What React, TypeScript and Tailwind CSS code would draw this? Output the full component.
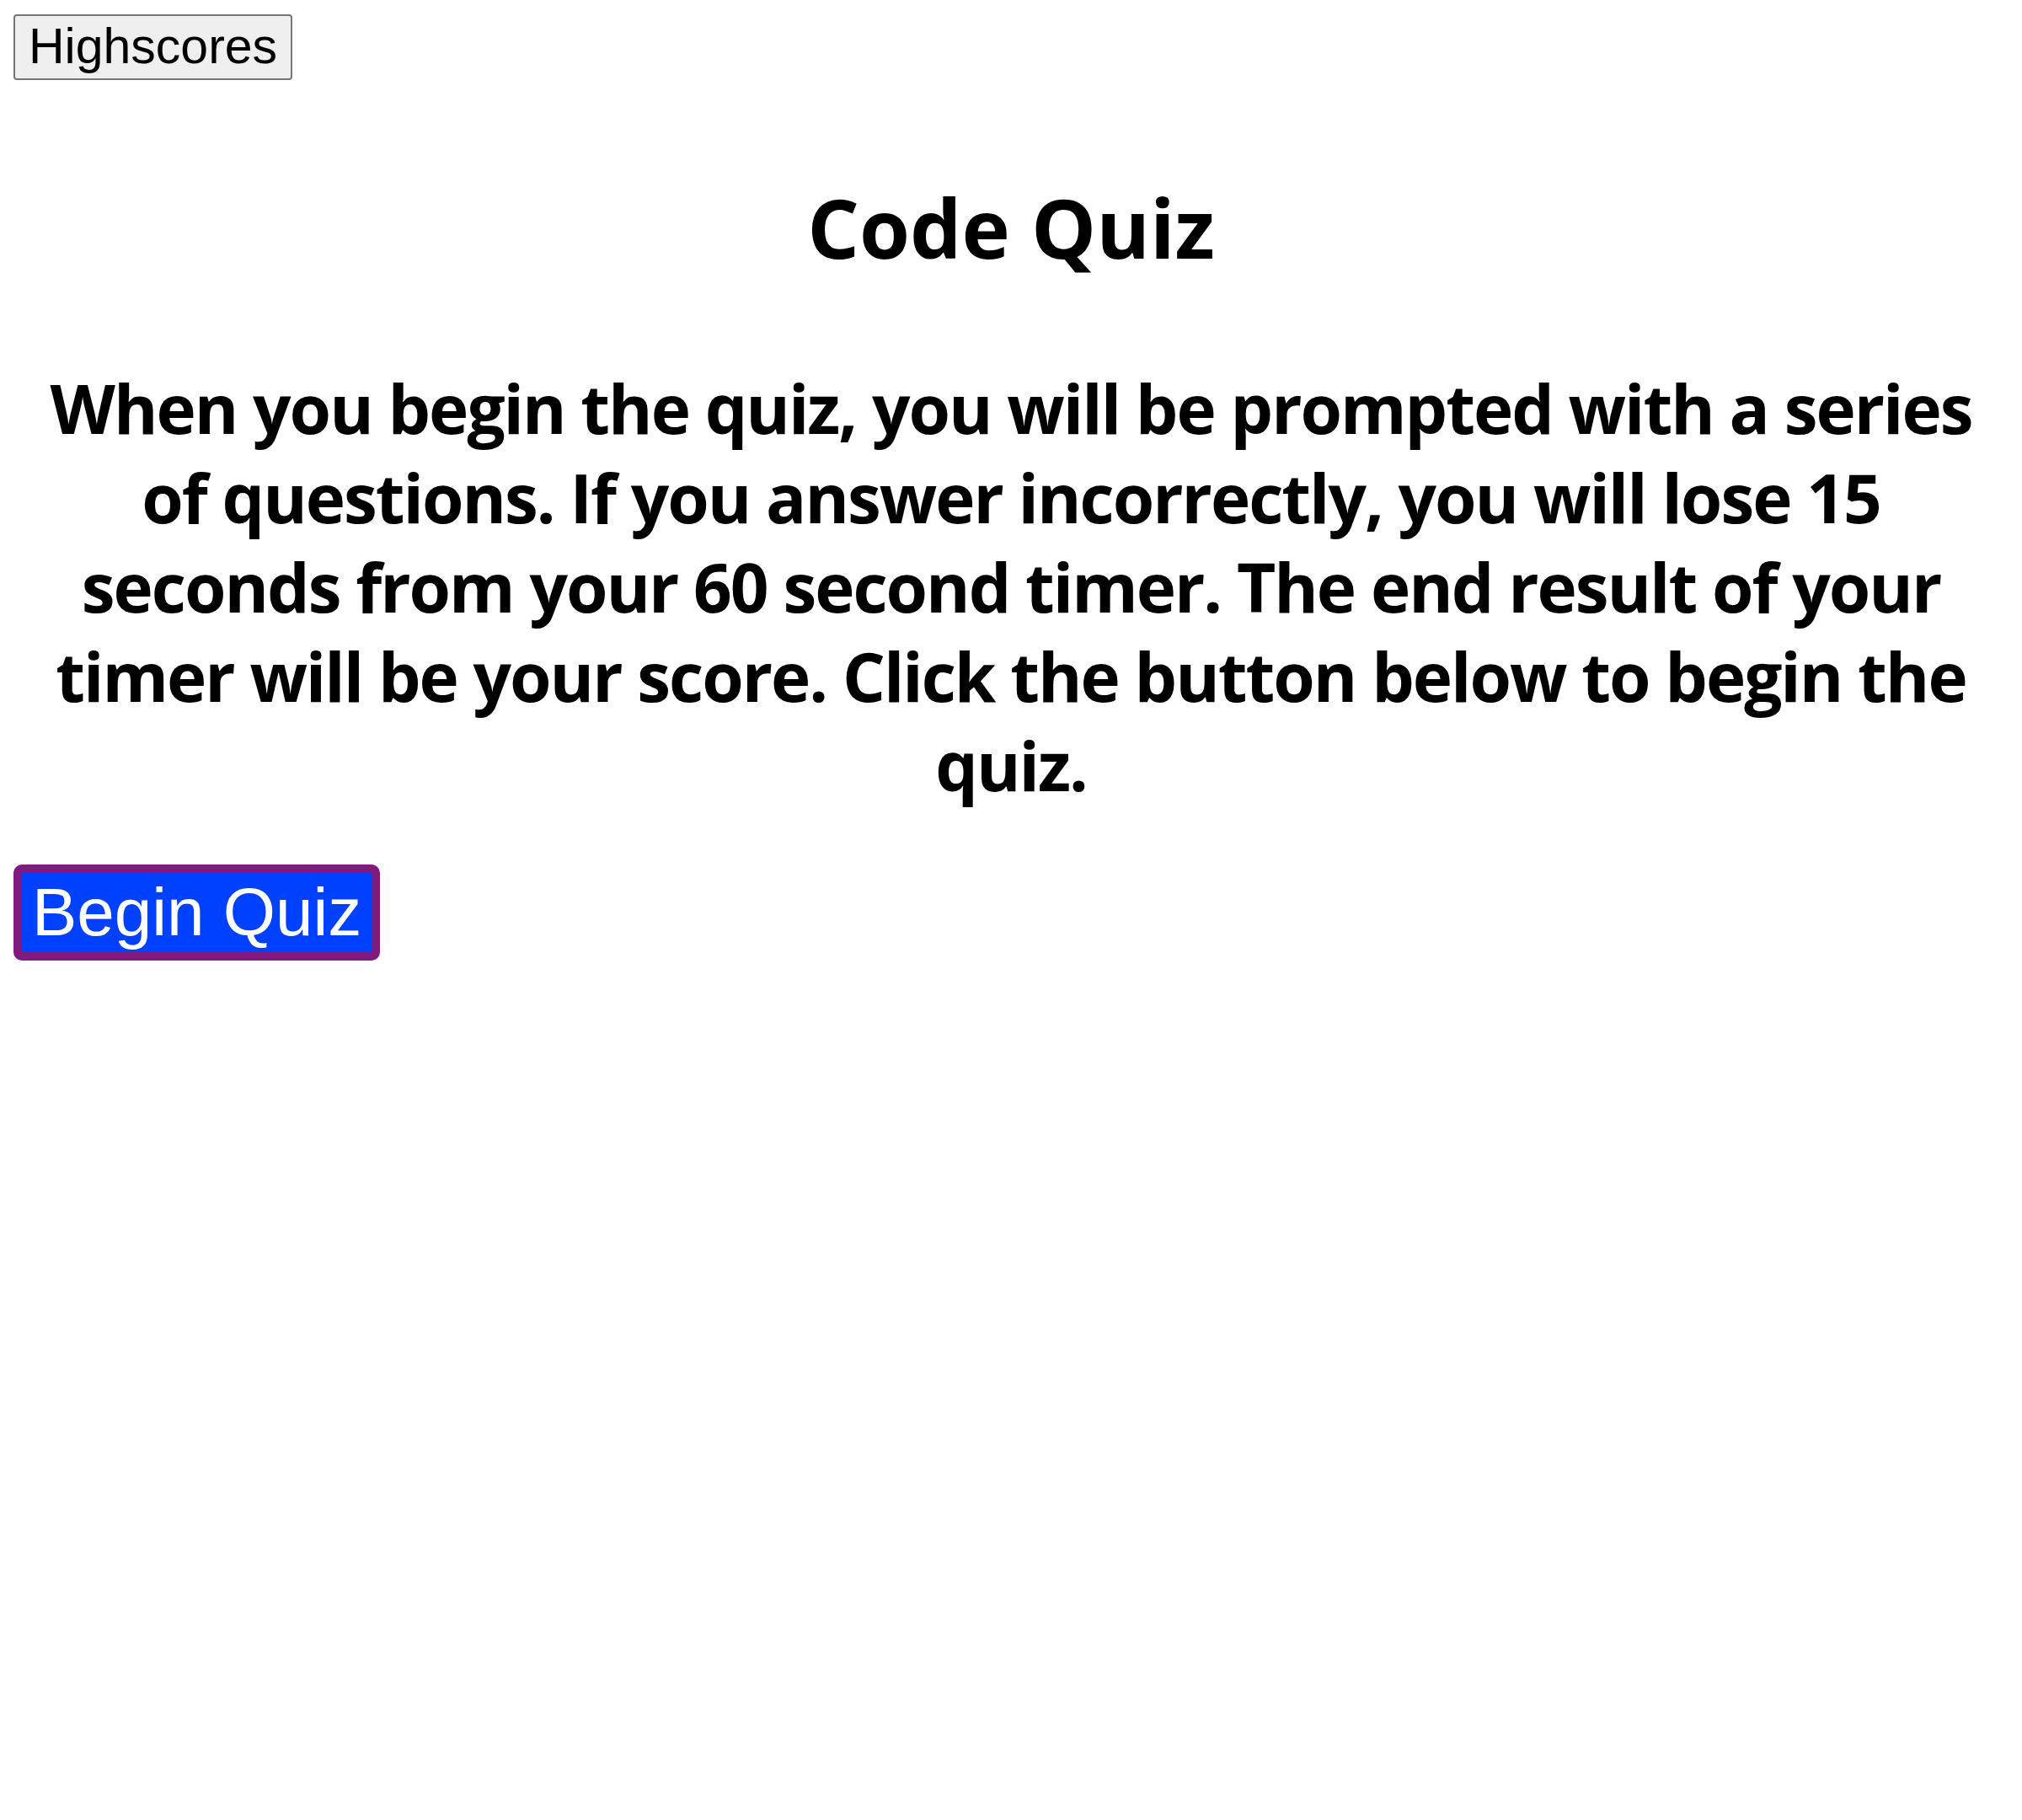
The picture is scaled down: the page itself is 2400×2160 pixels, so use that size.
export default function App() {
  return (
    <div className="min-h-screen bg-white px-[16px] pt-[17px] text-black">
      <button className="h-[78px] rounded-[4px] border-2 border-[#767676] bg-[#efefef] px-[16px] font-['Liberation_Sans',Arial,sans-serif] text-[59px] leading-[1.15] text-black">
        Highscores
      </button>
      <h1 className="mt-[110px] text-center font-['Open_Sans','Noto_Sans',sans-serif] text-[97px] font-bold leading-[1.33]">
        Code Quiz
      </h1>
      <p className="mx-auto mt-[97px] max-w-[2330px] text-center font-['Open_Sans','Noto_Sans',sans-serif] text-[80px] font-bold leading-[106px] tracking-[-2px]">
        When you begin the quiz, you will be prompted with a series of questions. If you answer incorrectly, you will lose 15 seconds from your 60 second timer. The end result of your timer will be your score. Click the button below to begin the quiz.
      </p>
      <button className="mt-[65px] rounded-[10px] border-[10px] border-[#801a7e] bg-[#0040ff] px-[12px] py-[1px] font-['Liberation_Sans',Arial,sans-serif] text-[80px] leading-[1.15] text-white">
        Begin Quiz
      </button>
    </div>
  );
}
